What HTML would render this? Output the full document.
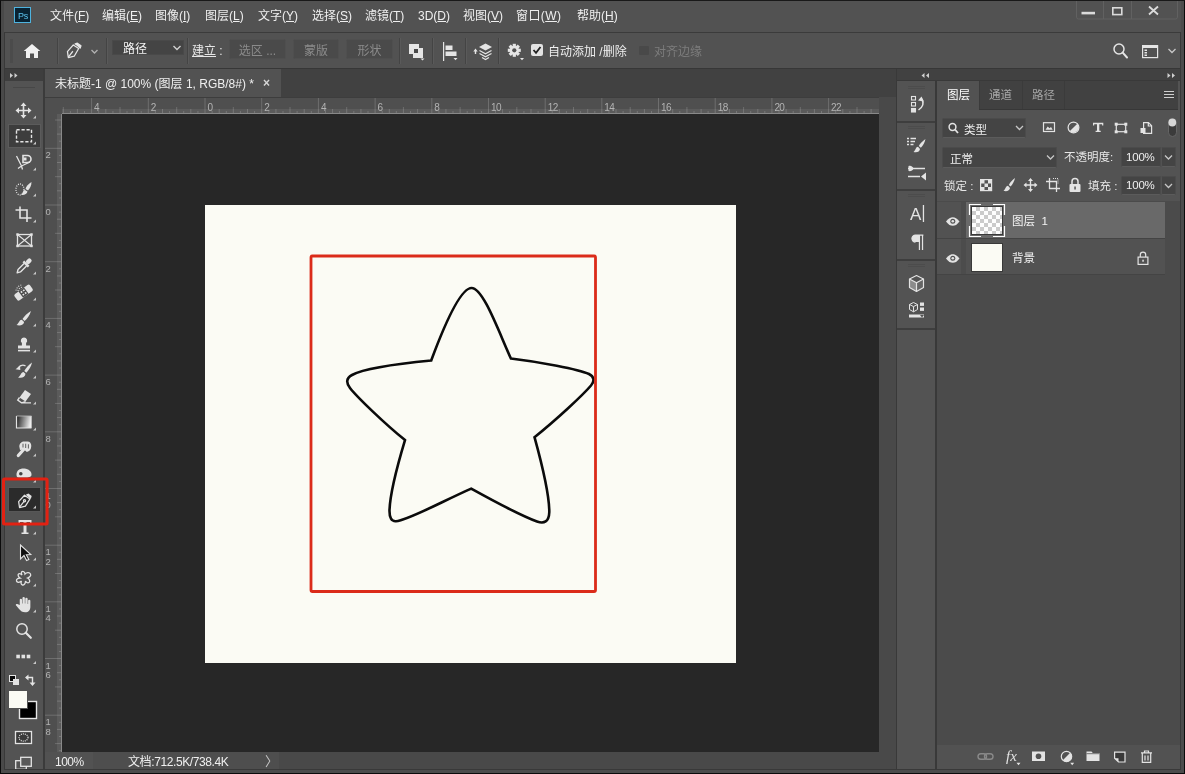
<!DOCTYPE html>
<html lang="zh-CN">
<head>
<meta charset="utf-8">
<title>Photoshop</title>
<style>
*{box-sizing:border-box;margin:0;padding:0}
html,body{width:1185px;height:774px;overflow:hidden;background:#535353}
body{font-family:"Liberation Sans","Noto Sans CJK SC",sans-serif;font-size:12px;color:#e6e6e6;position:relative}
.a{position:absolute}
.t{position:absolute;white-space:nowrap;line-height:16px;will-change:transform}
svg{position:absolute;overflow:visible}
#menubar{left:0;top:0;width:1185px;height:33px;background:#535353}
#optbar{left:0;top:33px;width:1185px;height:36px;background:#535353}
.mi{top:8px;font-size:12px;color:#f0f0f0}
.sep{top:38px;width:2px;height:26px;border-left:1px solid #454545;border-right:1px solid #5b5b5b}
.btn{will-change:transform;top:39px;height:20px;background:#4b4b4b;color:#8c8c8c;text-align:center;line-height:22px;font-size:12px;border:1px solid #505050;border-radius:2px;white-space:nowrap}
.hs{left:897px;width:38px;height:2px;background:#3f3f3f}
.grip{left:908px;width:17px;height:3px;border-top:1px solid #4d4d4d;border-bottom:1px solid #4d4d4d}
.fld{background:#454545;border-radius:2px;border:1px solid #4c4c4c;border-bottom-color:#5c5c5c}
.p{font-size:11.5px}
u{text-decoration:underline;text-underline-offset:0.5px}
</style>
</head>
<body>
<div id="app" style="position:absolute;left:0;top:0;width:1185px;height:774px;opacity:.999">
<!-- ===== window frame ===== -->
<div class="a" id="menubar"></div>
<div class="a" id="optbar"></div>
<div class="a" style="left:0;top:32px;width:1185px;height:1px;background:#3c3c3c"></div>
<div class="a" style="left:0;top:68px;width:1185px;height:1px;background:#383838"></div>

<!-- ===== menu ===== -->
<div id="menu">
<div class="a" style="left:14px;top:7px;width:16.500px;height:16px;background:#0a2434;border:1px solid #4fb4e0"></div>
<div class="t" style="left:17.500px;top:7.500px;font-size:9px;color:#5cc4f0;line-height:16px;letter-spacing:-0.2px">Ps</div>
<div class="t mi" style="left:50px">文件(<u>F</u>)</div>
<div class="t mi" style="left:102px">编辑(<u>E</u>)</div>
<div class="t mi" style="left:155px">图像(<u>I</u>)</div>
<div class="t mi" style="left:205px">图层(<u>L</u>)</div>
<div class="t mi" style="left:258px">文字(<u>Y</u>)</div>
<div class="t mi" style="left:312px">选择(<u>S</u>)</div>
<div class="t mi" style="left:365px">滤镜(<u>T</u>)</div>
<div class="t mi" style="left:418px">3D(<u>D</u>)</div>
<div class="t mi" style="left:463px">视图(<u>V</u>)</div>
<div class="t mi" style="left:516px;letter-spacing:.4px">窗口(<u>W</u>)</div>
<div class="t mi" style="left:576.5px">帮助(<u>H</u>)</div>
</div>


<!-- ===== options bar ===== -->
<div id="options">
<div class="a sep" style="left:57px"></div>
<div class="a sep" style="left:106px"></div>
<div class="a sep" style="left:187px"></div>
<div class="a sep" style="left:399px"></div>
<div class="a sep" style="left:432px"></div>
<div class="a sep" style="left:465px"></div>
<div class="a sep" style="left:498px"></div>
<div class="a" style="left:112px;top:40px;width:72px;height:15px;background:#454545;border:1px solid #4a4a4a"></div>
<div class="t" style="left:123px;top:41px;color:#f4f4f4">路径</div>
<div class="t" style="left:192px;top:43px;color:#e8e8e8"><u>建立</u> :</div>
<div class="a btn" style="left:229px;width:57px">选区 ...</div>
<div class="a btn" style="left:293px;width:46px">蒙版</div>
<div class="a btn" style="left:346px;width:47px">形状</div>
<div class="a" style="left:531px;top:44px;width:12px;height:12px;background:#e4e4e4;border-radius:2px"></div>
<div class="t" style="left:548px;top:44px;color:#f0f0f0">自动添加 /删除</div>
<div class="a" style="left:639px;top:46px;width:10px;height:9px;background:#4a4a4a;border-radius:1px"></div>
<div class="t" style="left:654px;top:44px;color:#7d7d7d">对齐边缘</div>
<svg width="1185" height="774" viewBox="0 0 1185 774" style="left:0;top:0">
 <!-- home -->
 <path d="M32 44 L23.700 51 L26 51 L26 58 L30 58 L30 53.500 L34 53.500 L34 58 L38 58 L38 51 L40.300 51 Z" fill="#f2f2f2"/>
 <!-- pen -->
 <g fill="none" stroke="#e8e8e8" stroke-width="1.4" stroke-linejoin="round" transform="translate(67,58) scale(0.9) translate(-67,-58)">
  <path d="M68.5 57.5 L67.5 51 L74 43.5 L80 47.5 L75 56 Z"/>
  <path d="M68.5 57 L73.5 50.5"/>
  <path d="M75.5 42.5 L78.5 41.5 L82.5 44.5 L81.5 47.5" fill="#e8e8e8"/>
 </g>
 <path d="M91.500 50 L94.500 53 L97.500 50" fill="none" stroke="#b0b0b0" stroke-width="1.400"/>
 <rect x="10" y="39" width="3" height="24" fill="#4c4c4c"/>
 <!-- dropdown chevron -->
 <path d="M173.5 46 L177 49.5 L180.5 46" fill="none" stroke="#d0d0d0" stroke-width="1.4"/>
 <!-- path ops -->
 <rect x="409" y="44" width="10" height="10" fill="#e6e6e6"/>
 <rect x="413" y="48" width="10" height="10" fill="#e6e6e6"/>
 <rect x="414" y="49" width="4" height="4" fill="#4a4a4a"/>
 <path d="M420.5 58.5 L424.5 58.5 L422.5 60.5 Z" fill="#e6e6e6"/>
 <!-- align -->
 <rect x="443" y="42" width="1.2" height="19" fill="#e6e6e6"/>
 <rect x="445.5" y="45.5" width="7" height="4.5" fill="#e6e6e6"/>
 <rect x="445.5" y="51.5" width="11" height="4.5" fill="#e6e6e6"/>
 <path d="M453.5 58 L457.5 58 L455.5 60.2 Z" fill="#e6e6e6"/>
 <!-- arrange -->
 <path d="M475.5 48.5 L473.3 51.5 L474.8 51.5 L474.8 54 L476.2 54 L476.2 51.5 L477.7 51.5 Z" fill="#e6e6e6"/>
 <path d="M485.5 43.5 L492 47 L485.5 50.5 L479 47 Z" fill="#e6e6e6"/>
 <path d="M479.5 50.5 L485.5 53.7 L491.5 50.5 M479.5 53.5 L485.5 56.7 L491.5 53.5 M482 57.5 L485.5 59.5 L489 57.5" fill="none" stroke="#e6e6e6" stroke-width="1.2"/>
 <!-- gear -->
 <g transform="translate(514.3,50.3)">
  <g fill="#e6e6e6">
   <rect x="-1.6" y="-6.5" width="3.2" height="13"/>
   <rect x="-1.6" y="-6.5" width="3.2" height="13" transform="rotate(45)"/>
   <rect x="-1.6" y="-6.5" width="3.2" height="13" transform="rotate(90)"/>
   <rect x="-1.6" y="-6.5" width="3.2" height="13" transform="rotate(135)"/>
   <circle r="4.6"/>
  </g>
  <circle r="2.1" fill="#535353"/>
 </g>
 <path d="M520 58 L524 58 L522 60.2 Z" fill="#e6e6e6"/>
 <!-- check -->
 <path d="M533.5 50 L536 52.8 L540.5 47" fill="none" stroke="#222" stroke-width="1.8"/>
 <!-- search -->
 <circle cx="1119" cy="49" r="5" fill="none" stroke="#e6e6e6" stroke-width="1.5"/>
 <path d="M1122.7 52.7 L1127 57.5" stroke="#e6e6e6" stroke-width="2" stroke-linecap="round"/>
 <!-- workspace -->
 <g transform="translate(0,1)"><rect x="1142.6" y="44.6" width="15" height="12" fill="none" stroke="#e6e6e6" stroke-width="1.2"/>
 <rect x="1143" y="45" width="14.4" height="2" fill="#e6e6e6"/>
 <rect x="1144.5" y="48.5" width="2.5" height="1.5" fill="#e6e6e6"/>
 <rect x="1144.5" y="51" width="2.5" height="1.5" fill="#e6e6e6"/>
 <rect x="1144.5" y="53.5" width="2.5" height="1.5" fill="#e6e6e6"/></g>
 <path d="M1168.5 49 L1172 52.5 L1175.5 49" fill="none" stroke="#c8c8c8" stroke-width="1.3"/>
 <!-- window controls -->
 <rect x="1076.5" y="-1" width="101" height="20" rx="2" fill="none" stroke="#626262" stroke-width="1"/>
 <path d="M1103.5 0 V19 M1131.5 0 V19" stroke="#626262" stroke-width="1"/>
 <rect x="1081.500" y="11.800" width="13.500" height="2.600" fill="#dcdcdc"/>
 <rect x="1112.8" y="7.8" width="9" height="6.8" fill="none" stroke="#dcdcdc" stroke-width="1.6"/>
 <path d="M1149 6.5 L1158 14.5 M1158 6.5 L1149 14.5" stroke="#dcdcdc" stroke-width="1.8"/>
</svg>
</div>

<!-- ===== tab bar / doc window ===== -->
<div class="a" style="left:45px;top:69px;width:852px;height:28px;background:#424242"></div>
<div class="a" style="left:45px;top:69px;width:236px;height:28px;background:#535353"></div>
<div class="t" style="left:55px;top:76px;font-size:12px;color:#f0f0f0">未标题-1 @ 100% (图层 1, RGB/8#) *</div>

<!-- rulers -->
<div class="a" style="left:45px;top:97px;width:834px;height:17px;background:#505050"></div>
<div class="a" style="left:45px;top:97px;width:17px;height:655px;background:#505050"></div>
<!-- canvas -->
<div class="a" style="left:62px;top:114px;width:817px;height:638px;background:#282828"></div>
<div class="a" style="left:205px;top:205px;width:531px;height:458px;background:#fcfcf5"></div>
<!-- rulers ticks -->
<svg width="1185" height="774" viewBox="0 0 1185 774" style="left:0;top:0">
<path d="M63.3 107 V114 M70.4 111 V114 M77.4 109 V114 M84.5 111 V114 M91.6 97 V114 M98.7 111 V114 M105.8 109 V114 M112.9 111 V114 M120.0 107 V114 M127.0 111 V114 M134.1 109 V114 M141.2 111 V114 M148.3 97 V114 M155.4 111 V114 M162.5 109 V114 M169.6 111 V114 M176.7 107 V114 M183.7 111 V114 M190.8 109 V114 M197.9 111 V114 M205.0 97 V114 M212.1 111 V114 M219.2 109 V114 M226.3 111 V114 M233.3 107 V114 M240.4 111 V114 M247.5 109 V114 M254.6 111 V114 M261.7 97 V114 M268.8 111 V114 M275.9 109 V114 M283.0 111 V114 M290.0 107 V114 M297.1 111 V114 M304.2 109 V114 M311.3 111 V114 M318.4 97 V114 M325.5 111 V114 M332.6 109 V114 M339.6 111 V114 M346.7 107 V114 M353.8 111 V114 M360.9 109 V114 M368.0 111 V114 M375.1 97 V114 M382.2 111 V114 M389.3 109 V114 M396.3 111 V114 M403.4 107 V114 M410.5 111 V114 M417.6 109 V114 M424.7 111 V114 M431.8 97 V114 M438.9 111 V114 M445.9 109 V114 M453.0 111 V114 M460.1 107 V114 M467.2 111 V114 M474.3 109 V114 M481.4 111 V114 M488.5 97 V114 M495.6 111 V114 M502.6 109 V114 M509.7 111 V114 M516.8 107 V114 M523.9 111 V114 M531.0 109 V114 M538.1 111 V114 M545.2 97 V114 M552.2 111 V114 M559.3 109 V114 M566.4 111 V114 M573.5 107 V114 M580.6 111 V114 M587.7 109 V114 M594.8 111 V114 M601.8 97 V114 M608.9 111 V114 M616.0 109 V114 M623.1 111 V114 M630.2 107 V114 M637.3 111 V114 M644.4 109 V114 M651.5 111 V114 M658.5 97 V114 M665.6 111 V114 M672.7 109 V114 M679.8 111 V114 M686.9 107 V114 M694.0 111 V114 M701.1 109 V114 M708.1 111 V114 M715.2 97 V114 M722.3 111 V114 M729.4 109 V114 M736.5 111 V114 M743.6 107 V114 M750.7 111 V114 M757.8 109 V114 M764.8 111 V114 M771.9 97 V114 M779.0 111 V114 M786.1 109 V114 M793.2 111 V114 M800.3 107 V114 M807.4 111 V114 M814.4 109 V114 M821.5 111 V114 M828.6 97 V114 M835.7 111 V114 M842.8 109 V114 M849.9 111 V114 M857.0 107 V114 M864.1 111 V114 M871.1 109 V114" stroke="#8e8e8e" stroke-width="1" fill="none" opacity=".5"/>
<path d="M55 120.0 H62 M59 127.0 H62 M57 134.1 H62 M59 141.2 H62 M45 148.3 H62 M59 155.4 H62 M57 162.5 H62 M59 169.6 H62 M55 176.7 H62 M59 183.7 H62 M57 190.8 H62 M59 197.9 H62 M45 205.0 H62 M59 212.1 H62 M57 219.2 H62 M59 226.3 H62 M55 233.3 H62 M59 240.4 H62 M57 247.5 H62 M59 254.6 H62 M45 261.7 H62 M59 268.8 H62 M57 275.9 H62 M59 283.0 H62 M55 290.0 H62 M59 297.1 H62 M57 304.2 H62 M59 311.3 H62 M45 318.4 H62 M59 325.5 H62 M57 332.6 H62 M59 339.6 H62 M55 346.7 H62 M59 353.8 H62 M57 360.9 H62 M59 368.0 H62 M45 375.1 H62 M59 382.2 H62 M57 389.3 H62 M59 396.3 H62 M55 403.4 H62 M59 410.5 H62 M57 417.6 H62 M59 424.7 H62 M45 431.8 H62 M59 438.9 H62 M57 445.9 H62 M59 453.0 H62 M55 460.1 H62 M59 467.2 H62 M57 474.3 H62 M59 481.4 H62 M45 488.5 H62 M59 495.6 H62 M57 502.6 H62 M59 509.7 H62 M55 516.8 H62 M59 523.9 H62 M57 531.0 H62 M59 538.1 H62 M45 545.2 H62 M59 552.2 H62 M57 559.3 H62 M59 566.4 H62 M55 573.5 H62 M59 580.6 H62 M57 587.7 H62 M59 594.8 H62 M45 601.8 H62 M59 608.9 H62 M57 616.0 H62 M59 623.1 H62 M55 630.2 H62 M59 637.3 H62 M57 644.4 H62 M59 651.5 H62 M45 658.5 H62 M59 665.6 H62 M57 672.7 H62 M59 679.8 H62 M55 686.9 H62 M59 694.0 H62 M57 701.1 H62 M59 708.1 H62 M45 715.2 H62 M59 722.3 H62 M57 729.4 H62 M59 736.5 H62 M55 743.6 H62 M59 750.7 H62" stroke="#8e8e8e" stroke-width="1" fill="none" opacity=".5"/>
<rect x="62" y="109" width="817" height="4" fill="#fff" opacity=".07"/><rect x="57" y="114" width="4" height="638" fill="#fff" opacity=".07"/>
<path d="M62 113.5 H879 M61.500 114 V752" stroke="#8a8a8a" stroke-width="1" fill="none"/>
<path d="M45 97.500 H879" stroke="#3e3e3e" stroke-width="1"/>
<g font-size="10" letter-spacing="-0.6" fill="#b4b4b4" font-family="Liberation Sans, sans-serif">
<text x="94.1" y="110.700">4</text><text x="150.8" y="110.700">2</text><text x="207.5" y="110.700">0</text><text x="264.2" y="110.700">2</text><text x="320.9" y="110.700">4</text><text x="377.6" y="110.700">6</text><text x="434.3" y="110.700">8</text><text x="491.0" y="110.700">10</text><text x="547.7" y="110.700">12</text><text x="604.3" y="110.700">14</text><text x="661.0" y="110.700">16</text><text x="717.7" y="110.700">18</text><text x="774.4" y="110.700">20</text><text x="831.1" y="110.700">22</text>
<text font-size="9.5" x="45.500" y="158.3">2</text><text font-size="9.5" x="45.500" y="215.0">0</text><text font-size="9.5" x="45.500" y="271.7">2</text><text font-size="9.5" x="45.500" y="328.4">4</text><text font-size="9.5" x="45.500" y="385.1">6</text><text font-size="9.5" x="45.500" y="441.8">8</text><text font-size="9.5" x="45.500" y="498.5">1</text><text font-size="9.5" x="45.500" y="508.0">0</text><text font-size="9.5" x="45.500" y="555.2">1</text><text font-size="9.5" x="45.500" y="564.7">2</text><text font-size="9.5" x="45.500" y="611.8">1</text><text font-size="9.5" x="45.500" y="621.3">4</text><text font-size="9.5" x="45.500" y="668.5">1</text><text font-size="9.5" x="45.500" y="678.0">6</text><text font-size="9.5" x="45.500" y="725.2">1</text><text font-size="9.5" x="45.500" y="734.7">8</text>
</g>
</svg>
<!-- scrollbar -->
<div class="a" style="left:879px;top:97px;width:17px;height:673px;background:#4a4a4a"></div>
<!-- status bar -->
<div class="a" style="left:45px;top:752px;width:48px;height:18px;background:#535353"></div>
<div class="a" style="left:93px;top:752px;width:186px;height:18px;background:#4f4f4f"></div>
<div class="a" style="left:279px;top:752px;width:600px;height:18px;background:#4a4a4a"></div>
<div class="t" style="left:55px;top:754px;color:#f0f0f0;letter-spacing:-0.5px">100%</div>
<div class="t" style="left:128px;top:754px;color:#f0f0f0;letter-spacing:-0.4px">文档:712.5K/738.4K</div>
<div class="t" style="left:265px;top:754px;color:#c8c8c8;font-size:13px">〉</div>
<div class="t" style="left:263px;top:75px;color:#d8d8d8;font-size:12px;font-weight:bold">×</div>


<!-- ===== left toolbar ===== -->
<div class="a" style="left:5px;top:69px;width:39px;height:12px;background:#3f3f3f"></div>


<!-- ===== tools ===== -->
<div class="a" style="left:43px;top:69px;width:2px;height:701px;background:#3c3c3c"></div>
<div class="a" style="left:8px;top:124px;width:33px;height:24px;background:#3e3e3e;border:1px solid #5c5c5c"></div>
<div class="a" style="left:8px;top:487px;width:33px;height:25px;background:#2c2c2c;border:1px solid #585858"></div>
<svg width="1185" height="774" viewBox="0 0 1185 774" style="left:0;top:0">
<defs><linearGradient id="gr" x1="0" y1="0" x2="1" y2="0.150"><stop offset="0" stop-color="#1c1c1c"/><stop offset="1" stop-color="#f0f0f0"/></linearGradient></defs>
<path d="M10 73 L13 75.5 L10 78 Z M14.5 73 L17.5 75.5 L14.5 78 Z" fill="#d0d0d0"/>
<rect x="13" y="87" width="22" height="1" fill="#484848"/>
<path d="M36 661 L36 664 L33 664 Z" fill="#c8c8c8"/>
<g transform="translate(15.5,102.5)"><path d="M8 0 L11 3.5 L8.8 3.5 L8.8 7.2 L12.5 7.2 L12.5 5 L16 8 L12.5 11 L12.5 8.8 L8.8 8.8 L8.8 12.5 L11 12.5 L8 16 L5 12.5 L7.2 12.5 L7.2 8.8 L3.5 8.8 L3.5 11 L0 8 L3.5 5 L3.5 7.2 L7.2 7.2 L7.2 3.5 L5 3.5 Z" fill="#e4e4e4"/></g><path d="M36 115.5 L36 118.5 L33 118.5 Z" fill="#c8c8c8"/>
<g transform="translate(15.5,128.5)"><rect x="1" y="1.300" width="15" height="12" fill="none" stroke="#e4e4e4" stroke-width="1.4" stroke-dasharray="3.2 1.8"/></g><path d="M36 141.5 L36 144.5 L33 144.5 Z" fill="#c8c8c8"/>
<g transform="translate(15.5,154.5)"><path d="M1 1.5 L6 11.5 L14.5 7.5 M6 11.5 L2.5 14 M6 11.5 L7 15" fill="none" stroke="#e4e4e4" stroke-width="1.3"/><path d="M7.5 1 H12 A3.2 3.2 0 0 1 12 8 H7.5 Z" fill="none" stroke="#e4e4e4" stroke-width="1.6"/><rect x="8" y="3" width="3" height="3" fill="#e4e4e4"/></g><path d="M36 167.5 L36 170.5 L33 170.5 Z" fill="#c8c8c8"/>
<g transform="translate(15.5,180.5)"><ellipse cx="4.5" cy="9" rx="4" ry="5.5" fill="none" stroke="#e4e4e4" stroke-width="1.3" stroke-dasharray="1 1.2"/><path d="M16 1.5 C13 3 10.5 6 10 8.5 L12.5 10 C14.5 8 16 5 16 1.5 Z" fill="#e4e4e4"/><path d="M9.5 9.5 C7 10 7.5 13 5.5 14.5 C9 15 11.5 13.5 12 11 Z" fill="#e4e4e4"/></g><path d="M36 193.5 L36 196.5 L33 196.5 Z" fill="#c8c8c8"/>
<g transform="translate(15.5,206.5)"><path d="M4.5 0 V11.5 H16 M0 3.5 H11.5 V15.5" fill="none" stroke="#e4e4e4" stroke-width="1.6"/></g><path d="M36 219.5 L36 222.5 L33 222.5 Z" fill="#c8c8c8"/>
<g transform="translate(15.5,232.5)"><g transform="translate(0.500,0)"><rect x="1.5" y="2" width="14" height="11.5" fill="none" stroke="#e4e4e4" stroke-width="1.3"/><path d="M1.5 2 L15.5 13.5 M15.5 2 L1.5 13.5" stroke="#e4e4e4" stroke-width="1.1"/><g fill="#e4e4e4"><rect x="0.3" y="0.8" width="2.4" height="2.4"/><rect x="14.3" y="0.8" width="2.4" height="2.4"/><rect x="0.3" y="12.3" width="2.4" height="2.4"/><rect x="14.3" y="12.3" width="2.4" height="2.4"/></g></g></g>
<g transform="translate(15.5,258.5)"><g transform="rotate(45 8 8)"><path d="M6.300 5.500 V14 L8 17 L9.700 14 V5.500" fill="none" stroke="#e4e4e4" stroke-width="1.400" stroke-linejoin="round"/><rect x="4.300" y="3.300" width="7.400" height="2.400" fill="#e4e4e4"/><rect x="5.800" y="-2.500" width="4.400" height="6" rx="2" fill="#e4e4e4"/></g></g><path d="M36 271.5 L36 274.5 L33 274.5 Z" fill="#c8c8c8"/>
<g transform="translate(15.5,284.5)"><g transform="rotate(-36 8 8)"><rect x="-1.500" y="4.200" width="19" height="7.800" rx="1.800" fill="#e4e4e4"/><rect x="4.600" y="4.200" width="6.800" height="7.800" fill="#4a4a4a"/><g fill="#e4e4e4"><rect x="5.800" y="5.600" width="1.700" height="1.700"/><rect x="8.600" y="5.600" width="1.700" height="1.700"/><rect x="5.800" y="8.800" width="1.700" height="1.700"/><rect x="8.600" y="8.800" width="1.700" height="1.700"/></g></g><path d="M0.500 6 A7 7 0 0 1 6 0.500 M2.500 6.500 A4.500 4.500 0 0 1 6.500 2.800" fill="none" stroke="#e4e4e4" stroke-width="1.100" stroke-dasharray="1 1.300"/></g><path d="M36 297.5 L36 300.5 L33 300.5 Z" fill="#c8c8c8"/>
<g transform="translate(15.5,310.5)"><path d="M15.5 0.5 C12 2.5 8.5 6 7 8.5 L9 10.5 C11.5 8.5 14.5 4.5 15.5 0.5 Z" fill="#e4e4e4"/><path d="M6.3 9.3 C3.5 9.5 3.8 12.5 1 14.5 C5 15.8 8.3 14 8.6 11.4 Z" fill="#e4e4e4"/></g><path d="M36 323.5 L36 326.5 L33 326.5 Z" fill="#c8c8c8"/>
<g transform="translate(15.5,336.5)"><path d="M8.5 1 A3.2 3.2 0 0 1 10.6 6.6 L10.6 9 H14.5 V12 H2.5 V9 H6.4 L6.4 6.6 A3.2 3.2 0 0 1 8.5 1 Z" fill="#e4e4e4"/><rect x="2.5" y="13.3" width="12" height="1.6" fill="#e4e4e4"/></g><path d="M36 349.5 L36 352.5 L33 352.5 Z" fill="#c8c8c8"/>
<g transform="translate(15.5,362.5)"><path d="M16.500 0 C13 2.500 10 6 8.800 8.600 L10.800 10.300 C13 8 15.800 4 16.500 0 Z" fill="#e4e4e4"/><path d="M8 9.400 C5.300 9.600 5.700 12.800 2.500 15 C6.500 16 9.700 14.500 10 11.300 Z" fill="#e4e4e4"/><path d="M2.500 5.500 C4.500 2.800 7.500 2.200 10 3.300" fill="none" stroke="#e4e4e4" stroke-width="1.300"/><path d="M0 6.800 L4.600 3.600 L4.800 7.600 Z" fill="#e4e4e4"/></g><path d="M36 375.5 L36 378.5 L33 378.5 Z" fill="#c8c8c8"/>
<g transform="translate(15.5,388.5)"><path d="M9.5 1.5 L15.5 5.5 L10 13 L4 9 Z" fill="#e4e4e4"/><path d="M4 9 L2.2 11.5 L6 14.3 H15.5 M6 14.3 L10 13" fill="none" stroke="#e4e4e4" stroke-width="1.3"/></g><path d="M36 401.5 L36 404.5 L33 404.5 Z" fill="#c8c8c8"/>
<g transform="translate(15.5,414.5)"><rect x="1" y="1.500" width="15" height="12" fill="url(#gr)"/><path d="M1 1.500 V13.500 H16" fill="none" stroke="#e4e4e4" stroke-width="1.200"/><path d="M1 1.500 H16 V13.500" fill="none" stroke="#bdbdbd" stroke-width=".8"/></g><path d="M36 427.5 L36 430.5 L33 430.5 Z" fill="#c8c8c8"/>
<g transform="translate(15.5,440.5)"><path d="M3.800 6 C3.800 3 6 1 9 1 H12 C14.500 1 15.800 3 15.800 5.500 C15.800 9 13.800 11 11.300 11.500 L8.500 9 L4.500 9.500 Z" fill="#e4e4e4"/><path d="M9 8 L2.800 15" stroke="#e4e4e4" stroke-width="3.200" stroke-linecap="round"/><path d="M7.500 3.200 V7 M10.200 3.200 V7.500 M12.900 3.800 V8" stroke="#535353" stroke-width=".9"/></g><path d="M36 453.5 L36 456.5 L33 456.5 Z" fill="#c8c8c8"/>
<g transform="translate(15.5,466.5)"><g transform="translate(0,2)"><path d="M1 6 C1 1.500 5 -0.500 9 0 C13 0.500 16.500 3 16 6.500 C15.800 8.500 13 9 9 9 H3 C1.500 9 1 8 1 6 Z" fill="#e4e4e4"/><circle cx="5.300" cy="5.300" r="1.800" fill="#444"/></g></g><path d="M36 479.5 L36 482.5 L33 482.5 Z" fill="#c8c8c8"/>
<g transform="translate(15.5,492.5)"><g transform="translate(9,8.300) scale(0.9) translate(-8,-8)"><g fill="none" stroke="#e4e4e4" stroke-width="1.4" stroke-linejoin="round"><path d="M2.5 15.5 L1.5 9 L8 1.8 L14 6 L9 14 Z"/><path d="M2.5 15 L7.3 9"/><circle cx="8" cy="8" r="1.2"/></g><path d="M9.3 1.2 L12.3 0 L16 2.8 L15 6" fill="#e4e4e4"/></g></g><path d="M36 505.5 L36 508.5 L33 508.5 Z" fill="#c8c8c8"/>
<g transform="translate(15.5,518.5)"><path transform="translate(1,0.500)" d="M2 1 H15 V4.5 H13.5 V3 H10 V13.5 H12 V15 H5 V13.5 H7 V3 H3.5 V4.5 H2 Z" fill="#e4e4e4"/></g><path d="M36 531.5 L36 534.5 L33 534.5 Z" fill="#c8c8c8"/>
<g transform="translate(15.5,544.5)"><path transform="translate(1.500,0)" d="M3.5 0.5 L3.5 14.5 L7 11 L9.6 16 L11.8 15 L9.3 10.2 L13.8 10 Z" fill="#111" stroke="#e4e4e4" stroke-width="1.1"/></g><path d="M36 557.5 L36 560.5 L33 560.5 Z" fill="#c8c8c8"/>
<g transform="translate(15.5,570.5)"><path d="M6 1.5 C7.5 0 9.5 1.5 9.5 3.5 C11 2 14 1.5 15 3.5 C16 5.5 13.5 7 12 7.5 C14 8.5 15 11 13.5 12 C12 13 10.5 11.5 10 10.5 C10 12.5 9 15 7 14.5 C5 14 5.5 11.5 6 10.5 C4.5 12 1.5 12.5 1 10.5 C0.5 8.5 3 7.5 4.5 7.5 C3 6.5 2 4.5 3 3.5 C4 2.5 5.5 3.5 6.5 4.5 C6 3.5 5.5 2.5 6 1.5 Z" fill="none" stroke="#e4e4e4" stroke-width="1.3"/></g><path d="M36 583.5 L36 586.5 L33 586.5 Z" fill="#c8c8c8"/>
<g transform="translate(15.5,596.5)"><path transform="translate(-0.500,0) scale(1.130,1)" d="M4.2 8.5 V3.2 A1 1 0 0 1 6.2 3.2 V7 H6.6 V1.6 A1 1 0 0 1 8.7 1.6 V7 H9.1 V2.4 A1 1 0 0 1 11.2 2.4 V7.5 H11.6 V4.2 A1 1 0 0 1 13.6 4.2 V10.5 C13.6 13.5 12 15.8 9 15.8 C6.5 15.8 5 14.5 3.6 12.5 L0.8 8.8 C0.2 7.8 1.6 6.8 2.6 7.8 Z" fill="#e4e4e4"/></g><path d="M36 609.5 L36 612.5 L33 612.5 Z" fill="#c8c8c8"/>
<g transform="translate(15.5,622.5)"><circle cx="6.5" cy="6.5" r="5.2" fill="none" stroke="#e4e4e4" stroke-width="1.5"/><path d="M10.3 10.3 L15.3 15.3" stroke="#e4e4e4" stroke-width="2.2" stroke-linecap="round"/></g>
<g transform="translate(15.5,648.5)"><rect x="0.800" y="6.200" width="3.600" height="3.600" fill="#e4e4e4"/><rect x="6" y="6.200" width="3.600" height="3.600" fill="#e4e4e4"/><rect x="11.200" y="6.200" width="3.600" height="3.600" fill="#e4e4e4"/></g>
<!-- default colors / swap -->
<rect x="9.5" y="675.5" width="6" height="6" fill="#0a0a0a" stroke="#e4e4e4" stroke-width="1"/>
<rect x="13" y="679" width="6" height="6" fill="#e4e4e4"/>
<path d="M26 677.5 H32.5 V684" fill="none" stroke="#e4e4e4" stroke-width="1.4"/>
<path d="M28.5 674.5 L25 677.5 L28.5 680.5 Z M29.5 682.5 L32.5 686 L35.5 682.5 Z" fill="#e4e4e4"/>
<!-- swatches -->
<rect x="19.5" y="701.5" width="17" height="17" fill="#000" stroke="#e8e8e8" stroke-width="1.4"/>
<rect x="8.5" y="690.5" width="19" height="18" fill="#fcfcf5" stroke="#535353" stroke-width="1"/>
<!-- quick mask -->
<rect x="15.5" y="731.5" width="16" height="12" fill="#3c3c3c" stroke="#e4e4e4" stroke-width="1.3"/>
<ellipse cx="23.5" cy="737.5" rx="4.5" ry="3.6" fill="none" stroke="#e4e4e4" stroke-width="1.2" stroke-dasharray="1 1"/>
<!-- screen mode -->
<rect x="15.700" y="760.700" width="10.600" height="8.600" fill="none" stroke="#e4e4e4" stroke-width="1.3"/>
<rect x="20.700" y="757.300" width="10.600" height="9" fill="#5a5a5a" stroke="#e4e4e4" stroke-width="1.3"/>
</svg>

<!-- ===== right panels ===== -->
<div id="right">
<div class="a" style="left:897px;top:69px;width:283px;height:12px;background:#424242"></div>
<div class="a" style="left:896px;top:69px;width:1px;height:701px;background:#3a3a3a"></div>
<div class="a" style="left:935px;top:81px;width:2px;height:689px;background:#3a3a3a"></div>
<div class="a" style="left:897px;top:80px;width:283px;height:1px;background:#3a3a3a"></div>
<!-- collapsed strip separators -->
<div class="a hs" style="top:121px"></div>
<div class="a hs" style="top:189px"></div>
<div class="a hs" style="top:259px"></div>
<div class="a hs" style="top:328px"></div>
<div class="a grip" style="top:86px"></div>
<div class="a grip" style="top:126px"></div>
<div class="a grip" style="top:194px"></div>
<div class="a grip" style="top:264px"></div>
<!-- layers panel -->
<div class="a" style="left:937px;top:81px;width:241px;height:28px;background:#424242"></div>
<div class="a" style="left:937px;top:81px;width:42px;height:29px;background:#535353"></div>
<div class="a" style="left:979px;top:81px;width:1px;height:28px;background:#3c3c3c"></div>
<div class="a" style="left:1022px;top:81px;width:1px;height:28px;background:#3c3c3c"></div>
<div class="a" style="left:1064px;top:81px;width:1px;height:28px;background:#3c3c3c"></div>
<div class="a" style="left:979px;top:109px;width:199px;height:1px;background:#383838"></div>
<div class="t p" style="left:946.5px;top:87px;color:#fff">图层</div>
<div class="t p" style="left:988.5px;top:87px;color:#a8a8a8">通道</div>
<div class="t p" style="left:1031.5px;top:87px;color:#a8a8a8">路径</div>
<!-- filter row -->
<div class="a fld" style="left:942px;top:118px;width:84px;height:20px"></div>
<div class="t p" style="left:963.5px;top:122px;color:#f0f0f0">类型</div>
<!-- blend row -->
<div class="a fld" style="left:942px;top:147px;width:115px;height:21px"></div>
<div class="t p" style="left:950px;top:150.5px;color:#f0f0f0">正常</div>
<div class="t p" style="left:1064px;top:149px;color:#e8e8e8">不透明度:</div>
<div class="a fld" style="left:1121px;top:147px;width:40px;height:20px"></div>
<div class="a fld" style="left:1161px;top:147px;width:15px;height:20px;border-left:1px solid #535353"></div>
<div class="t p" style="left:1125.5px;top:149px;color:#f0f0f0;letter-spacing:-.2px">100%</div>
<!-- lock row -->
<div class="t p" style="left:944px;top:178px;color:#e8e8e8">锁定 :</div>
<div class="t p" style="left:1088px;top:178px;color:#e8e8e8">填充 :</div>
<div class="a fld" style="left:1121px;top:176px;width:40px;height:19px"></div>
<div class="a fld" style="left:1161px;top:176px;width:15px;height:19px;border-left:1px solid #535353"></div>
<div class="t p" style="left:1125.5px;top:177px;color:#f0f0f0;letter-spacing:-.2px">100%</div>
<!-- layer list -->
<div class="a" style="left:937px;top:201px;width:243px;height:544px;background:#4c4c4c"></div>
<div class="a" style="left:937px;top:202px;width:228px;height:36px;background:#535353"></div>
<div class="a" style="left:966px;top:202px;width:199px;height:36px;background:#6a6a6a"></div>
<div class="a" style="left:937px;top:239px;width:228px;height:35px;background:#535353"></div>
<div class="a" style="left:961px;top:202px;width:5px;height:72px;background:#4d4d4d"></div>
<div class="a" style="left:937px;top:238px;width:228px;height:1px;background:#454545"></div>
<div class="a" style="left:937px;top:274px;width:228px;height:1px;background:#454545"></div>
<div class="a" style="left:971px;top:206px;width:32px;height:29px;border:1px solid #3a3a3a;background:#fff;background-image:conic-gradient(#ccc 25%,#fff 0 50%,#ccc 0 75%,#fff 0);background-size:8px 8px"></div>
<div class="a" style="left:971px;top:243px;width:32px;height:29px;background:#fcfcf5;border:1px solid #3a3a3a"></div>
<div class="t p" style="left:1012px;top:213px;color:#f4f4f4">图层&nbsp; 1</div>
<div class="t p" style="left:1012px;top:250px;color:#f4f4f4">背景</div>
<!-- bottom bar -->
<div class="a" style="left:937px;top:745px;width:243px;height:25px;background:#535353"></div>
<svg width="1185" height="774" viewBox="0 0 1185 774" style="left:0;top:0">
 <path d="M1167.5 73 L1170.5 75.5 L1167.5 78 Z M1172 73 L1175 75.5 L1172 78 Z" fill="#d0d0d0"/>
 <path d="M924.5 73 L921.5 75.5 L924.5 78 Z M929 73 L926 75.5 L929 78 Z" fill="#d0d0d0"/>
 <path d="M1164 91.5 H1174 M1164 94.5 H1174 M1164 97.5 H1174" stroke="#d0d0d0" stroke-width="1.2"/>
 <!-- strip icons -->
 <g fill="none" stroke="#e4e4e4" stroke-width="1.1"><rect x="911.5" y="96.5" width="4" height="3.5"/><rect x="911.5" y="102.5" width="4" height="3.5"/><rect x="911.5" y="108.5" width="4" height="3.5" fill="#e4e4e4"/><path d="M918.5 110 C923 107 924.5 103 921.5 99" stroke-width="1.5"/></g>
 <path d="M918 100.5 L921.5 96.5 L924 101.5 Z" fill="#e4e4e4"/>
 <g><path d="M925.5 139 C923 140.5 920 143.5 918.8 146 L920.8 147.8 C923 145.5 925 142 925.5 139 Z" fill="#e4e4e4"/><path d="M918 146.8 C915.5 147 916 150 913.5 152 C917 153 919.8 151.5 920 149 Z" fill="#e4e4e4"/><path d="M907 138.5 H909 M910.5 138.5 H916 M907 141.5 H909 M910.5 141.5 H915 M907 144.5 H909 M910.5 144.5 H913.5" stroke="#e4e4e4" stroke-width="1.3"/></g>
 <g><path d="M908 168.5 H925 M908 176.5 H920" stroke="#e4e4e4" stroke-width="1.4"/><path d="M908.5 166 C911 165 913 167 913.5 168.5 C913 170.5 910.5 171.5 908.5 171 Z" fill="#e4e4e4"/><path d="M926 172.5 L921 176.5 L926 180.5 Z" fill="#e4e4e4"/></g>
 <rect x="922.8" y="205" width="1.3" height="17" fill="#e4e4e4"/>
 <g transform="translate(919,243) scale(0.880) translate(-917,-242)"><path d="M913 241 A4 4 0 0 1 913 233 H922 M917.5 233 V250 M921 233 V250" fill="none" stroke="#e4e4e4" stroke-width="1.4"/><path d="M913 233 A4 4 0 0 0 913 241 H917 V233 Z" fill="#e4e4e4"/></g>
 <path d="M909.5 279 L916.5 282.8 V291.5 L909.5 287.5 Z" fill="#8c8c8c"/><path d="M923.5 279 L916.5 282.8 V291.5 L923.5 287.5 Z" fill="#666"/><g fill="none" stroke="#e4e4e4" stroke-width="1.2" stroke-linejoin="round"><path d="M916.5 275.5 L923.5 279 V287.5 L916.5 291.5 L909.5 287.5 V279 Z"/><path d="M909.5 279 L916.5 282.8 L923.5 279 M916.5 282.8 V291.5"/></g>
 <g fill="none" stroke="#e4e4e4" stroke-width="1" stroke-linejoin="round"><path d="M913.5 302.5 L917.5 304.5 V309.5 L913.5 311.8 L909.5 309.5 V304.5 Z"/><path d="M909.5 304.5 L913.5 306.6 L917.5 304.5 M913.5 306.6 V311.8"/></g>
 <rect x="920" y="302.5" width="4" height="3.4" fill="#e4e4e4"/><rect x="920" y="307.5" width="4" height="3.4" fill="#e4e4e4"/><rect x="909" y="314.5" width="15" height="3" fill="#e4e4e4"/><path d="M920 315 L924 315 L922 317.5 Z" fill="#535353"/>
 <!-- filter row icons -->
 <circle cx="952.5" cy="127" r="3.4" fill="none" stroke="#e4e4e4" stroke-width="1.5"/><path d="M955 129.5 L958 133" stroke="#e4e4e4" stroke-width="1.8"/>
 <path d="M1016 126 L1019.5 129.5 L1023 126" fill="none" stroke="#c8c8c8" stroke-width="1.3"/>
 <rect x="1043.500" y="122.700" width="11" height="8.800" fill="none" stroke="#e4e4e4" stroke-width="1.200"/><path d="M1045.500 129.700 L1047.700 126.500 L1049.500 128.300 L1051 127 L1052.700 129.700 Z" fill="#e4e4e4"/>
 <circle cx="1073.5" cy="127.5" r="5.4" fill="none" stroke="#e4e4e4" stroke-width="1.2"/><path d="M1069.7 131.3 A5.4 5.4 0 0 0 1077.3 123.7 Z" fill="#e4e4e4"/>
 <path d="M1093 122.700 H1103.300 V125.500 H1102.100 V124.200 H1099.300 V130.700 H1100.700 V131.900 H1095.600 V130.700 H1097 V124.200 H1094.200 V125.500 H1093 Z" fill="#e4e4e4"/>
 <rect x="1116.3" y="124.3" width="9.4" height="7.4" fill="none" stroke="#e4e4e4" stroke-width="1.2"/><g fill="#e4e4e4"><rect x="1114.7" y="122.7" width="3" height="3"/><rect x="1124.3" y="122.7" width="3" height="3"/><rect x="1114.7" y="130.3" width="3" height="3"/><rect x="1124.3" y="130.3" width="3" height="3"/></g>
 <path d="M1143.6 122.6 H1148.5 L1151.6 125.7 V133.4 H1143.6 Z M1148.3 122.8 V126 H1151.4" fill="none" stroke="#e4e4e4" stroke-width="1.2"/><rect x="1140.5" y="128" width="5" height="5" fill="#e4e4e4"/>
 <rect x="1168.5" y="118.5" width="8" height="18" rx="4" fill="#3c3c3c" stroke="#666" stroke-width="1"/><circle cx="1172.300" cy="122.500" r="3.900" fill="#d8d8d8"/>
 <!-- blend row chevrons -->
 <path d="M1047 155.5 L1050.5 159 L1054 155.5" fill="none" stroke="#c8c8c8" stroke-width="1.3"/>
 <path d="M1165 155.5 L1168.5 159 L1172 155.5" fill="none" stroke="#c8c8c8" stroke-width="1.3"/>
 <path d="M1165 184 L1168.5 187.500 L1172 184" fill="none" stroke="#c8c8c8" stroke-width="1.3"/>
 <!-- lock row icons -->
 <rect x="980.6" y="179.600" width="11" height="11" fill="none" stroke="#e4e4e4" stroke-width="1.2"/><g fill="#e4e4e4"><rect x="981" y="180" width="3.5" height="3.5"/><rect x="988" y="180" width="3.5" height="3.5"/><rect x="984.5" y="183.500" width="3.5" height="3.5"/><rect x="981" y="187" width="3.5" height="3.5"/><rect x="988" y="187" width="3.5" height="3.5"/></g>
 <path d="M1015 178 C1012.5 179.500 1010 182.500 1008.8 185 L1010.6 186.600 C1012.600 184.300 1014.500 181 1015 178 Z" fill="#e4e4e4"/><path d="M1008 185.800 C1005.600 186 1006 188.800 1003.500 190.800 C1007 191.800 1009.700 190.400 1010 188 Z" fill="#e4e4e4"/>
 <path d="M1030.500 178 L1033 181 L1031.200 181 L1031.200 184.300 L1034.500 184.300 L1034.500 182.500 L1037.500 185 L1034.500 187.500 L1034.500 185.700 L1031.200 185.700 L1031.200 189 L1033 189 L1030.500 192 L1028 189 L1029.800 189 L1029.800 185.700 L1026.500 185.700 L1026.500 187.500 L1023.500 185 L1026.500 182.500 L1026.500 184.300 L1029.800 184.300 L1029.800 181 L1028 181 Z" fill="#e4e4e4"/>
 <path d="M1049.500 178 V188.500 H1060 M1046 181.500 H1056.500 V192" fill="none" stroke="#e4e4e4" stroke-width="1.3"/><path d="M1053 178.500 L1058 178.500 L1058 184" fill="none" stroke="#e4e4e4" stroke-width="1" stroke-dasharray="1 1"/>
 <rect x="1069.500" y="184" width="11" height="8" rx="1" fill="#e4e4e4"/><path d="M1072 184 V181.500 A3 3 0 0 1 1078 181.500 V184" fill="none" stroke="#e4e4e4" stroke-width="1.5"/><rect x="1074.300" y="186.500" width="1.500" height="3" fill="#535353"/>
 <!-- eyes -->
 <g id="eye"><path d="M946 221.500 C948.500 218.200 950.500 217.200 952.800 217.200 C955 217.200 957 218.200 959.500 221.500 C957 224.800 955 225.800 952.800 225.800 C950.500 225.800 948.500 224.800 946 221.500 Z" fill="#e4e4e4"/><circle cx="952.800" cy="221.300" r="2.500" fill="#535353"/><circle cx="952.800" cy="221.300" r="1.300" fill="#e4e4e4"/></g>
 <use href="#eye" y="37"/>
 <!-- layer thumb brackets -->
 <path d="M969.500 215 V204.500 H981 M993 204.500 H1004.500 V215 M1004.500 226 V236.500 H993 M981 236.500 H969.500 V226" fill="none" stroke="#fff" stroke-width="1.200"/>
 <!-- bg lock -->
 <rect x="1138.100" y="257.100" width="9.800" height="7.300" fill="none" stroke="#e4e4e4" stroke-width="1.200"/><path d="M1140.300 257 V254.800 A2.700 2.700 0 0 1 1145.700 254.800 V257" fill="none" stroke="#e4e4e4" stroke-width="1.200"/><rect x="1142.300" y="259.700" width="1.500" height="2" fill="#e4e4e4"/>
 <!-- bottom icons -->
 <g fill="none" stroke="#8a8a8a" stroke-width="1.400"><rect x="978" y="753.700" width="8.500" height="5.600" rx="2.800"/><rect x="984.500" y="753.700" width="8.500" height="5.600" rx="2.800"/></g>
 <path d="M1016.500 762.800 L1020.500 762.800 L1018.500 765.300 Z M1070.200 762.800 L1074.200 762.800 L1072.200 765.300 Z" fill="#e4e4e4"/>
 <rect x="1032" y="751.500" width="13" height="9.500" fill="#e4e4e4"/><circle cx="1038.500" cy="756.200" r="2.800" fill="#535353"/>
 <circle cx="1066.500" cy="756.500" r="5.200" fill="none" stroke="#e4e4e4" stroke-width="1.200"/><path d="M1062.800 760.200 A5.200 5.200 0 0 0 1070.200 752.800 Z" fill="#e4e4e4"/>
 <path d="M1086.500 751.500 H1091.500 L1092.800 753 H1099.500 V761 H1086.500 Z" fill="#e4e4e4"/><path d="M1086.500 753.700 H1099.500" stroke="#535353" stroke-width=".8"/>
 <path d="M1114.600 752.100 H1125 V762 H1118.500 L1114.600 758.300 Z" fill="#3a3a3a" stroke="#e4e4e4" stroke-width="1.200"/><path d="M1114.800 758.300 L1118.500 762 L1118.500 758.300 Z" fill="#e4e4e4"/>
 <path d="M1141 752.800 H1152 M1144.500 752.500 V751 H1148.500 V752.500 M1142.300 753.500 V762.300 H1150.700 V753.500 M1145 755.500 V760.500 M1148 755.500 V760.500" fill="none" stroke="#e4e4e4" stroke-width="1.200"/>
</svg>
<div class="t" style="left:910px;top:204px;font-size:17px;line-height:22px;color:#e4e4e4">A</div>
<div class="t" style="left:1006px;top:747px;font-size:15px;line-height:18px;font-style:italic;font-family:'Liberation Serif',serif;color:#e4e4e4">fx</div>
</div>

<!-- window frame edges -->
<div class="a" style="left:0;top:0;width:1185px;height:774px;border:1px solid #0c0c0c;border-top-color:#1a1a1a"></div>
<div class="a" style="left:1px;top:1px;width:3px;height:772px;background:#4a4a4a"></div>
<div class="a" style="left:4px;top:32px;width:1px;height:738px;background:#3a3a3a"></div>
<div class="a" style="left:1181px;top:1px;width:3px;height:772px;background:#4d4d4d"></div>
<div class="a" style="left:1180px;top:32px;width:1px;height:738px;background:#3a3a3a"></div>
<div class="a" style="left:1px;top:770px;width:1183px;height:3px;background:#4d4d4d"></div>
<div class="a" style="left:4px;top:769px;width:1177px;height:1px;background:#3a3a3a"></div>
<!-- ===== artwork ===== -->
<svg width="1185" height="774" viewBox="0 0 1185 774" style="left:0;top:0">
 <path id="star" d="M431.2 360.5 C444 326 460 288 471.6 288 C483 288 498 330 510.9 358.5 C540 362 578 369 589 374 C594 376.5 595 381 591 385.5 C583 395 556 420 534.5 437.2 C543 468 549.3 498 549.3 512 C549 522 544 524 537 521.5 C522 516 490 499 471.2 488.6 C445 500 408 520.5 396 521.2 C391.5 521.5 389.3 518 389.5 510 C390 497 396 470 405 440.1 C385 424 357 397 350 388 C346.5 383.5 345.5 378.5 352 375 C365 368 400 363.5 431.2 360.5 Z" fill="none" stroke="#0c0c0c" stroke-width="2.6" stroke-linejoin="miter"/>
 <rect x="311" y="256" width="284.5" height="335.5" rx="1.5" fill="none" stroke="#dc2c1a" stroke-width="2.8"/>
 <rect x="3.500" y="479" width="43.600" height="45" rx="1" fill="none" stroke="#e32213" stroke-width="3"/>
</svg>

</div>
</body>
</html>
